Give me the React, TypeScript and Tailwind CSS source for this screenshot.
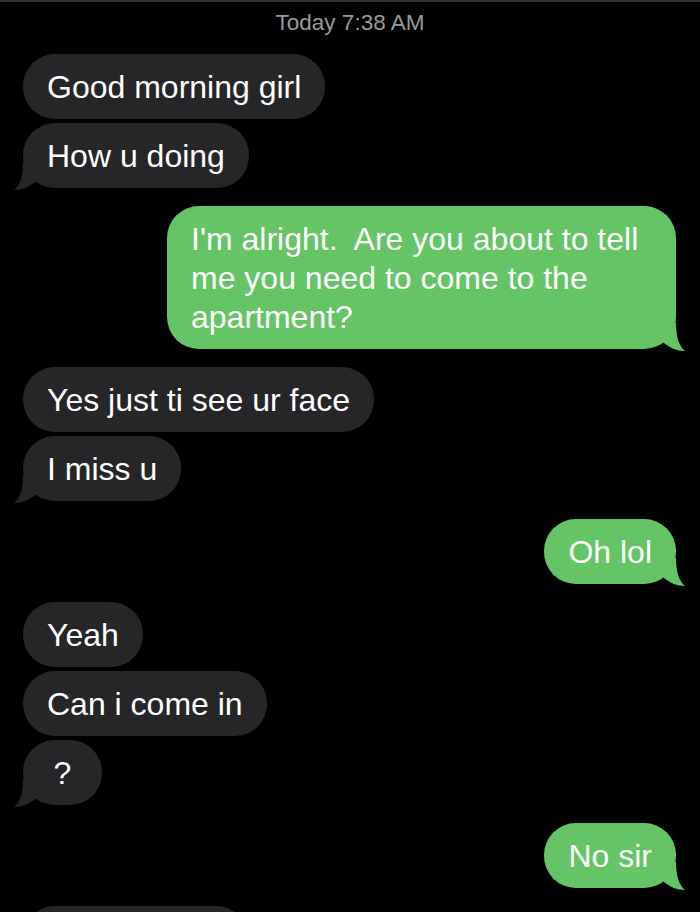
type Msg = { text: string; me?: boolean; tail?: boolean };

const groups: Msg[][] = [
  [{ text: "Good morning girl" }, { text: "How u doing", tail: true }],
  [{ text: "I'm alright.  Are you about to tell me you need to come to the apartment?", me: true, tail: true }],
  [{ text: "Yes just ti see ur face" }, { text: "I miss u", tail: true }],
  [{ text: "Oh lol", me: true, tail: true }],
  [{ text: "Yeah" }, { text: "Can i come in" }, { text: "?", tail: true }],
  [{ text: "No sir", me: true, tail: true }],
];

function Tail({ me }: { me?: boolean }) {
  return (
    <svg
      width="30"
      height="32"
      viewBox="0 0 30 32"
      className={
        me
          ? "absolute -right-[9px] -bottom-[2px] -scale-x-100 fill-[#65c466]"
          : "absolute -left-[9px] -bottom-[2px] fill-[#262628]"
      }
    >
      <path d="M9 4 C9 18 6 27 0 32 C8 32 15 29 21 24 L30 16 L30 4 Z" />
    </svg>
  );
}

function Bubble({ m }: { m: Msg }) {
  return (
    <div className={m.me ? "flex justify-end" : "flex justify-start"}>
      <div
        className={`relative max-w-[509px] min-w-[79px] rounded-[32px] px-6 pt-[14px] pb-[12px] text-center text-[32px] leading-[39px] text-white whitespace-pre-wrap ${
          m.me ? "bg-[#65c466] text-left" : "bg-[#262628]"
        }`}
      >
        {m.tail && <Tail me={m.me} />}
        <span className="relative">{m.text}</span>
      </div>
    </div>
  );
}

export default function App() {
  return (
    <div className="min-h-screen bg-black font-['Liberation_Sans',Arial,sans-serif] overflow-hidden">
      <div className="h-[2px] bg-[#303032]" />
      <div className="pt-[8px] mb-[19px] text-center text-[22.5px] leading-[25px] text-[#98989d]">
        Today 7:38 AM
      </div>
      <div className="flex flex-col gap-[18px] pl-[23px] pr-[24px]">
        {groups.map((g, i) => (
          <div key={i} className="flex flex-col gap-[4px]">
            {g.map((m, j) => (
              <Bubble key={j} m={m} />
            ))}
          </div>
        ))}
        {/* next message, cut off by the bottom of the screen */}
        <div className="h-[65px] w-[225px] rounded-[32px] bg-[#262628]" />
      </div>
    </div>
  );
}
